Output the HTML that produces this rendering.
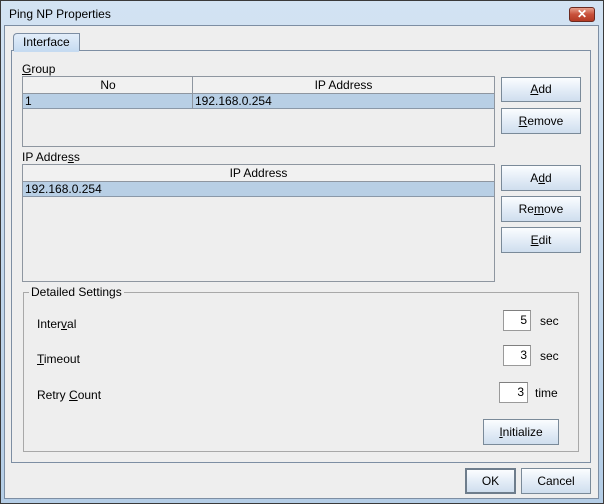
<!DOCTYPE html>
<html><head><meta charset="utf-8"><style>
*{box-sizing:border-box;margin:0;padding:0}
body{width:604px;height:504px;overflow:hidden;background:#fff;font-family:"Liberation Sans",Arial,sans-serif;font-size:12px;color:#000;position:relative}
.a{position:absolute}
.win{left:0;top:0;width:604px;height:504px;border:1px solid #3a3a3a;background:linear-gradient(#d3e3f3,#b4cde6);}
.content{left:4px;top:25px;width:595px;height:474px;background:#eeeeee;border:1px solid #7d8ea3}
.btn{position:absolute;border:1px solid #7a8a99;background:linear-gradient(#fbfdff,#e4edf7 50%,#cfdeee);text-align:center;font-size:12px;}
.tbl{position:absolute;border:1px solid #8e96a0;background:#eeeeee}
.hdr{position:absolute;left:0;top:0;right:0;height:17px;border-bottom:1px solid #8e96a0;background:#f1f1f1;text-align:center;line-height:16px}
.row{position:absolute;left:0;right:0;height:15px;background:#b8cfe5;border-bottom:1px solid #8a98a8;line-height:14px;padding-left:2px}
.fld{position:absolute;border:1px solid #9a9a9a;border-top-color:#7f7f7f;background:#fff;text-align:right;padding-right:3px;line-height:18px}
u{text-decoration:underline}
</style></head><body>
<div class="a win"></div>
<div class="a" style="left:9px;top:7px;font-size:12px;color:#000">Ping NP Properties</div>
<div class="a" style="left:569px;top:7px;width:26px;height:15px;border:1px solid #6b2a20;border-radius:3px;background:linear-gradient(#e8a08c,#c8503a 50%,#b33a24);color:#fff;text-align:center;font-size:12px;line-height:13px;font-weight:bold">✕</div>
<div class="a content"></div>
<!-- tab -->
<div class="a" style="left:11px;top:50px;width:580px;height:413px;border:1px solid #7d8ea3"></div>
<div class="a" style="left:13px;top:33px;width:67px;height:18px;border:1px solid #7d8ea3;border-bottom:none;border-radius:4px 0 0 0;background:linear-gradient(#e3eefa,#c6dbf1);padding-left:9px;line-height:17px">Interface</div>
<div class="a" style="left:14px;top:50px;width:65px;height:2px;background:#c6dbf1"></div>
<div class="a" style="left:22px;top:62px"><u>G</u>roup</div>
<div class="tbl" style="left:22px;top:76px;width:473px;height:71px">
 <div class="hdr"><span style="position:absolute;left:0;width:170px">No</span><span style="position:absolute;left:170px;right:0">IP Address</span></div>
 <div class="row" style="top:17px"><span style="position:absolute;left:2px">1</span><span style="position:absolute;left:172px">192.168.0.254</span></div>
 <div class="a" style="left:169px;top:0;width:1px;height:32px;background:#8e96a0"></div>
</div>
<div class="btn" style="left:501px;top:77px;width:80px;height:25px;line-height:23px"><u>A</u>dd</div>
<div class="btn" style="left:501px;top:108px;width:80px;height:26px;line-height:24px"><u>R</u>emove</div>
<div class="a" style="left:22px;top:150px">IP Addre<u>s</u>s</div>
<div class="tbl" style="left:22px;top:164px;width:473px;height:118px">
 <div class="hdr">IP Address</div>
 <div class="row" style="top:17px">192.168.0.254</div>
</div>
<div class="btn" style="left:501px;top:165px;width:80px;height:26px;line-height:24px">A<u>d</u>d</div>
<div class="btn" style="left:501px;top:196px;width:80px;height:26px;line-height:24px">Re<u>m</u>ove</div>
<div class="btn" style="left:501px;top:227px;width:80px;height:26px;line-height:24px"><u>E</u>dit</div>
<!-- detailed -->
<div class="a" style="left:23px;top:292px;width:556px;height:160px;border:1px solid #a8a8a8"></div>
<div class="a" style="left:29px;top:285px;background:#eeeeee;padding:0 2px">Detailed Settings</div>
<div class="a" style="left:37px;top:317px">Inter<u>v</u>al</div>
<div class="fld" style="left:503px;top:310px;width:28px;height:21px">5</div>
<div class="a" style="left:540px;top:314px">sec</div>
<div class="a" style="left:37px;top:352px"><u>T</u>imeout</div>
<div class="fld" style="left:503px;top:345px;width:28px;height:21px">3</div>
<div class="a" style="left:540px;top:349px">sec</div>
<div class="a" style="left:37px;top:388px">Retry <u>C</u>ount</div>
<div class="fld" style="left:499px;top:382px;width:29px;height:21px">3</div>
<div class="a" style="left:535px;top:386px">time</div>
<div class="btn" style="left:483px;top:419px;width:76px;height:26px;line-height:24px"><u>I</u>nitialize</div>
<div class="btn" style="left:465px;top:468px;width:51px;height:26px;line-height:22px;border:2px solid #6e7d8c">OK</div>
<div class="btn" style="left:521px;top:468px;width:70px;height:26px;line-height:24px">Cancel</div>
</body></html>
